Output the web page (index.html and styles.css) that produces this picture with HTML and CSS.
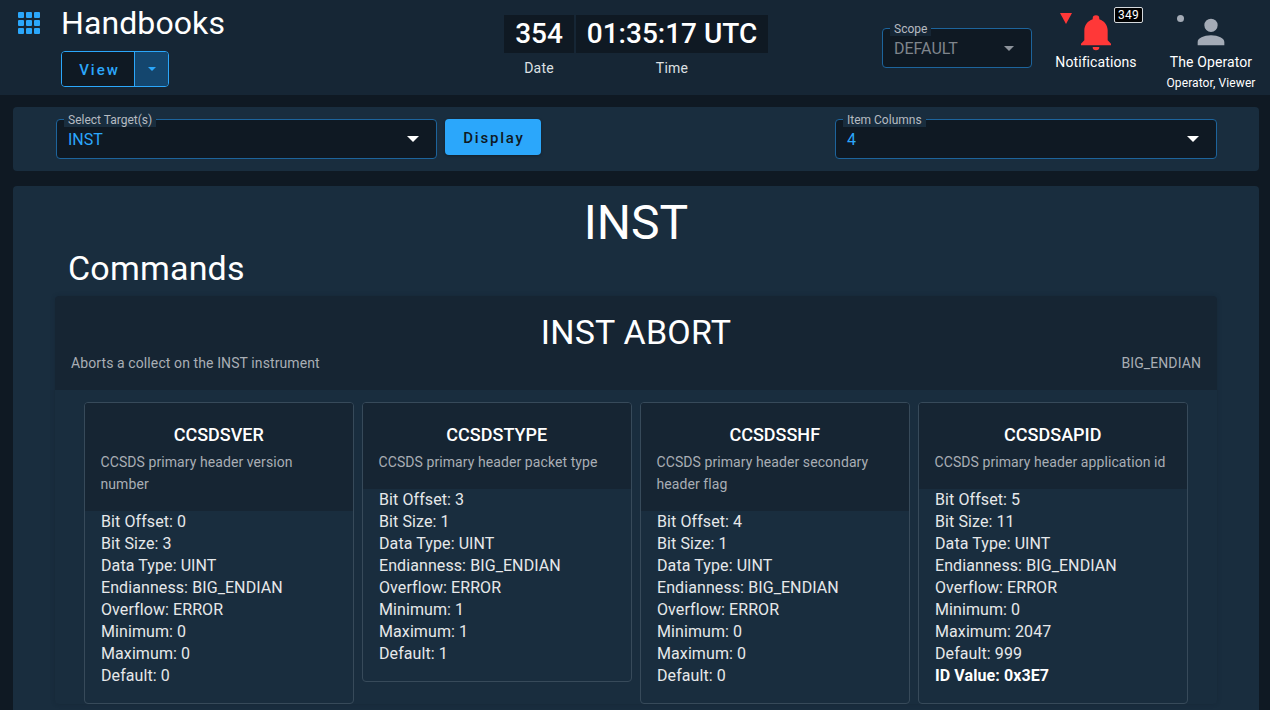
FILE: index.html
```html
<!DOCTYPE html>
<html lang="en">
<head>
    <meta charset="UTF-8">
    <meta name="viewport" content="width=device-width, initial-scale=1.0">
    <title>Handbooks</title>
    <link rel="stylesheet" href="styles.css">
</head>
<body>
    <header class="topbar">
        <div class="brand">
            <svg class="apps-icon" width="22" height="22" viewBox="0 0 22 22" fill="#2ba7fb">
                <rect x="0" y="0" width="6" height="6" rx="1"/><rect x="8" y="0" width="6" height="6" rx="1"/><rect x="16" y="0" width="6" height="6" rx="1"/>
                <rect x="0" y="8" width="6" height="6" rx="1"/><rect x="8" y="8" width="6" height="6" rx="1"/><rect x="16" y="8" width="6" height="6" rx="1"/>
                <rect x="0" y="16" width="6" height="6" rx="1"/><rect x="8" y="16" width="6" height="6" rx="1"/><rect x="16" y="16" width="6" height="6" rx="1"/>
            </svg>
            <div class="brand-text">
                <div class="page-title">Handbooks</div>
                <div class="split-button">
                    <span class="split-main">View</span>
                    <span class="split-arrow"><span class="caret caret-small"></span></span>
                </div>
            </div>
        </div>

        <div class="clock">
            <div class="clock-cell">
                <div class="clock-value clock-date">354</div>
                <div class="clock-label">Date</div>
            </div>
            <div class="clock-cell">
                <div class="clock-value clock-time">01:35:17 UTC</div>
                <div class="clock-label">Time</div>
            </div>
        </div>

        <div class="topbar-right">
            <div class="field scope-field">
                <span class="field-label">Scope</span>
                <span class="field-value">DEFAULT</span>
                <span class="caret caret-grey"></span>
            </div>
            <div class="notifications">
                <span class="alert-triangle"></span>
                <svg class="bell-icon" width="40" height="40" viewBox="0 0 24 24" fill="#ff3838">
                    <path d="M21,19V20H3V19L5,17V11C5,7.9 7.03,5.17 10,4.29C10,4.19 10,4.1 10,4A2,2 0 0,1 12,2A2,2 0 0,1 14,4C14,4.1 14,4.19 14,4.29C16.97,5.17 19,7.9 19,11V17L21,19M14,21A2,2 0 0,1 12,23A2,2 0 0,1 10,21"/>
                </svg>
                <span class="badge">349</span>
                <div class="notifications-label">Notifications</div>
            </div>
            <div class="user">
                <span class="user-dot"></span>
                <svg class="user-icon" width="40" height="40" viewBox="0 0 24 24" fill="#a4abb6">
                    <path d="M12,4A4,4 0 0,1 16,8A4,4 0 0,1 12,12A4,4 0 0,1 8,8A4,4 0 0,1 12,4M12,14C16.42,14 20,15.79 20,18V20H4V18C4,15.79 7.58,14 12,14Z"/>
                </svg>
                <div class="user-name">The Operator</div>
                <div class="user-roles">Operator, Viewer</div>
            </div>
        </div>
    </header>

    <main class="content">
        <section class="panel toolbar">
            <div class="toolbar-left">
                <div class="field target-field">
                    <span class="field-label">Select Target(s)</span>
                    <span class="field-value field-value-blue">INST</span>
                    <span class="caret"></span>
                </div>
                <button class="display-button">Display</button>
            </div>
            <div class="field columns-field">
                <span class="field-label">Item Columns</span>
                <span class="field-value field-value-blue">4</span>
                <span class="caret"></span>
            </div>
        </section>

        <section class="panel handbook">
            <h1 class="target-title">INST</h1>
            <h2 class="section-title">Commands</h2>
            <article class="command">
                <div class="command-head">
                    <div class="command-title">INST ABORT</div>
                    <div class="command-meta">
                        <span>Aborts a collect on the INST instrument</span>
                        <span>BIG_ENDIAN</span>
                    </div>
                </div>
                <div class="item-grid">
                    <div class="item-card">
                        <div class="item-head">
                            <div class="item-name">CCSDSVER</div>
                            <div class="item-desc">CCSDS primary header version number</div>
                        </div>
                        <div class="item-body">
                            <div>Bit Offset: 0</div>
                            <div>Bit Size: 3</div>
                            <div>Data Type: UINT</div>
                            <div>Endianness: BIG_ENDIAN</div>
                            <div>Overflow: ERROR</div>
                            <div>Minimum: 0</div>
                            <div>Maximum: 0</div>
                            <div>Default: 0</div>
                        </div>
                    </div>
                    <div class="item-card">
                        <div class="item-head">
                            <div class="item-name">CCSDSTYPE</div>
                            <div class="item-desc">CCSDS primary header packet type</div>
                        </div>
                        <div class="item-body">
                            <div>Bit Offset: 3</div>
                            <div>Bit Size: 1</div>
                            <div>Data Type: UINT</div>
                            <div>Endianness: BIG_ENDIAN</div>
                            <div>Overflow: ERROR</div>
                            <div>Minimum: 1</div>
                            <div>Maximum: 1</div>
                            <div>Default: 1</div>
                        </div>
                    </div>
                    <div class="item-card">
                        <div class="item-head">
                            <div class="item-name">CCSDSSHF</div>
                            <div class="item-desc">CCSDS primary header secondary header flag</div>
                        </div>
                        <div class="item-body">
                            <div>Bit Offset: 4</div>
                            <div>Bit Size: 1</div>
                            <div>Data Type: UINT</div>
                            <div>Endianness: BIG_ENDIAN</div>
                            <div>Overflow: ERROR</div>
                            <div>Minimum: 0</div>
                            <div>Maximum: 0</div>
                            <div>Default: 0</div>
                        </div>
                    </div>
                    <div class="item-card">
                        <div class="item-head">
                            <div class="item-name">CCSDSAPID</div>
                            <div class="item-desc">CCSDS primary header application id</div>
                        </div>
                        <div class="item-body">
                            <div>Bit Offset: 5</div>
                            <div>Bit Size: 11</div>
                            <div>Data Type: UINT</div>
                            <div>Endianness: BIG_ENDIAN</div>
                            <div>Overflow: ERROR</div>
                            <div>Minimum: 0</div>
                            <div>Maximum: 2047</div>
                            <div>Default: 999</div>
                            <div class="item-id">ID Value: 0x3E7</div>
                        </div>
                    </div>
                </div>
            </article>
        </section>
    </main>
</body>
</html>
```

FILE: styles.css
```css
* {
    box-sizing: border-box;
}
html, body {
    height: 710px;
    overflow: hidden;
}
body {
    margin: 0;
    background: #0f1923;
    color: #fff;
    font-family: Roboto, "Liberation Sans", sans-serif;
    font-size: 14px;
}

/* top bar */
.topbar {
    height: 95px;
    background: #162635;
    display: flex;
    position: relative;
    padding-left: 18px;
}
.brand {
    display: flex;
    align-items: flex-start;
    width: 486px;
}
.apps-icon {
    margin-top: 12px;
}
.brand-text {
    margin-left: 21px;
}
.page-title {
    font-size: 32px;
    line-height: 36px;
    margin-top: 5px;
    letter-spacing: 0.1px;
}
.split-button {
    display: flex;
    width: 108px;
    height: 36px;
    margin-top: 10px;
    border: 1px solid #2ba7fb;
    border-radius: 4px;
    overflow: hidden;
}
.split-main {
    width: 72px;
    padding-left: 3px;
    background: #0f1923;
    color: #2ba7fb;
    font-size: 15px;
    font-weight: 500;
    letter-spacing: 2px;
    line-height: 36px;
    text-align: center;
}
.split-arrow {
    flex: 1;
    background: #14466e;
    border-left: 1px solid #2ba7fb;
    display: flex;
    align-items: center;
    justify-content: center;
}
.caret {
    width: 0;
    height: 0;
    border-left: 6px solid transparent;
    border-right: 6px solid transparent;
    border-top: 6px solid #fff;
}
.caret-small {
    border-left-width: 4px;
    border-right-width: 4px;
    border-top: 4px solid #2ba7fb;
}
.caret-grey {
    border-top-color: #8d939b;
}

/* clock */
.clock {
    display: flex;
    gap: 2px;
    margin-top: 15px;
}
.clock-cell {
    text-align: center;
}
.clock-value {
    background: #0f1923;
    height: 38px;
    line-height: 38px;
    font-size: 28px;
    font-weight: 500;
}
.clock-date {
    width: 70px;
}
.clock-time {
    width: 192px;
}
.clock-label {
    margin-top: 6px;
    color: #dde0e3;
    font-size: 14px;
    line-height: 18px;
    letter-spacing: 0.2px;
}

.topbar-right {
    display: flex;
    margin-left: 114px;
}
.field {
    position: relative;
    display: flex;
    align-items: center;
    justify-content: space-between;
    background: #0f1923;
    border: 1px solid #1d649c;
    border-radius: 4px;
    padding: 0 11px;
    font-size: 16px;
}
.field-label {
    position: absolute;
    top: -6px;
    left: 7px;
    padding: 0 4px;
    background: #162635;
    color: #b6bbc1;
    font-size: 12px;
    line-height: 13px;
}
.field-value {
    color: #7f858c;
}
.field-value-blue {
    color: #2ba7fb;
}
.scope-field {
    width: 150px;
    height: 40px;
    margin-top: 28px;
    padding-right: 17px;
}
.scope-field .caret {
    border-left-width: 5px;
    border-right-width: 5px;
    border-top-width: 5px;
}

/* notifications and user */
.notifications {
    position: relative;
    width: 100px;
    margin-left: 14px;
    text-align: center;
}
.alert-triangle {
    position: absolute;
    left: 14px;
    top: 13px;
    border-left: 6px solid transparent;
    border-right: 6px solid transparent;
    border-top: 11px solid #ff3838;
}
.bell-icon {
    display: block;
    margin: 12px auto 0;
}
.badge {
    position: absolute;
    left: 68px;
    top: 7px;
    width: 29px;
    height: 16px;
    background: #000;
    border: 1px solid #d4d8dc;
    border-radius: 2px;
    font-size: 12px;
    line-height: 14px;
    letter-spacing: 0.3px;
}
.notifications-label {
    font-size: 14px;
    line-height: 18px;
    margin-top: 1px;
    letter-spacing: 0.1px;
}
.user {
    position: relative;
    width: 100px;
    margin-left: 15px;
    text-align: center;
}
.user-dot {
    position: absolute;
    left: 16px;
    top: 15px;
    width: 7px;
    height: 7px;
    border-radius: 50%;
    background: #a4abb6;
}
.user-icon {
    display: block;
    margin: 12px auto 0;
}
.user-name {
    font-size: 14px;
    line-height: 18px;
    margin-top: 1px;
    letter-spacing: 0.1px;
}
.user-roles {
    font-size: 12px;
    line-height: 16px;
    margin-top: 4px;
    letter-spacing: 0.1px;
    white-space: nowrap;
}

/* page body */
.content {
    padding: 12px 11px 0 13px;
}
.panel {
    background: #192d3e;
    border-radius: 4px;
}
.toolbar {
    height: 64px;
    display: flex;
    justify-content: space-between;
    padding: 12px 42px 0 43px;
}
.toolbar-left {
    display: flex;
    gap: 8px;
}
.target-field {
    width: 381px;
    height: 40px;
    padding-right: 17px;
}
.columns-field {
    width: 382px;
    height: 40px;
    padding-right: 17px;
}
.toolbar .field-label {
    background: #192d3e;
}
.display-button {
    width: 96px;
    height: 36px;
    padding: 2px 0 0 2px;
    border: none;
    border-radius: 4px;
    background: #2ba7fb;
    color: #0f1923;
    font-family: inherit;
    font-size: 15px;
    font-weight: 500;
    letter-spacing: 1.8px;
    box-shadow: 0 1px 3px rgba(0, 0, 0, 0.3);
}
.handbook {
    margin-top: 15px;
    padding: 0 42px;
    height: 530px;
}
.target-title {
    margin: 0;
    padding-top: 10px;
    font-size: 48px;
    font-weight: 400;
    line-height: 54px;
    text-align: center;
}
.section-title {
    margin: 0;
    padding: 0 13px;
    font-size: 34px;
    font-weight: 400;
    line-height: 36px;
    letter-spacing: 0.2px;
}
.command {
    margin-top: 10px;
    border-radius: 4px;
    box-shadow: 0 0 4px rgba(15, 25, 35, 0.25);
}
.command-head {
    background: #162533;
    height: 94px;
    padding: 16px 16px 0;
    border-radius: 4px 4px 0 0;
}
.command-title {
    font-size: 34px;
    line-height: 40px;
    text-align: center;
    letter-spacing: 0.2px;
}
.command-meta {
    display: flex;
    justify-content: space-between;
    margin-top: 0;
    color: #a9aeb5;
    font-size: 14px;
    line-height: 22px;
    letter-spacing: 0.1px;
}

/* item cards */
.item-grid {
    display: grid;
    grid-template-columns: repeat(4, 270px);
    gap: 8px;
    align-items: start;
    padding: 12px 29px 0;
}
.item-card {
    border: 1px solid #374a5a;
    border-radius: 4px;
    overflow: hidden;
}
.item-head {
    background: #162533;
    padding: 20px 16px 16px 15.5px;
    color: #a9aeb5;
}
.item-name {
    color: #fff;
    font-size: 18px;
    font-weight: 500;
    line-height: 24px;
    text-align: center;
}
.item-desc {
    margin-top: 4px;
    font-size: 14px;
    line-height: 22px;
    letter-spacing: 0.08px;
}
.item-body {
    padding: 0 16px 16px;
    font-size: 16px;
    line-height: 22px;
    letter-spacing: 0.09px;
    color: #e6e8ea;
}
.item-id {
    font-weight: 700;
    color: #fff;
}
```
